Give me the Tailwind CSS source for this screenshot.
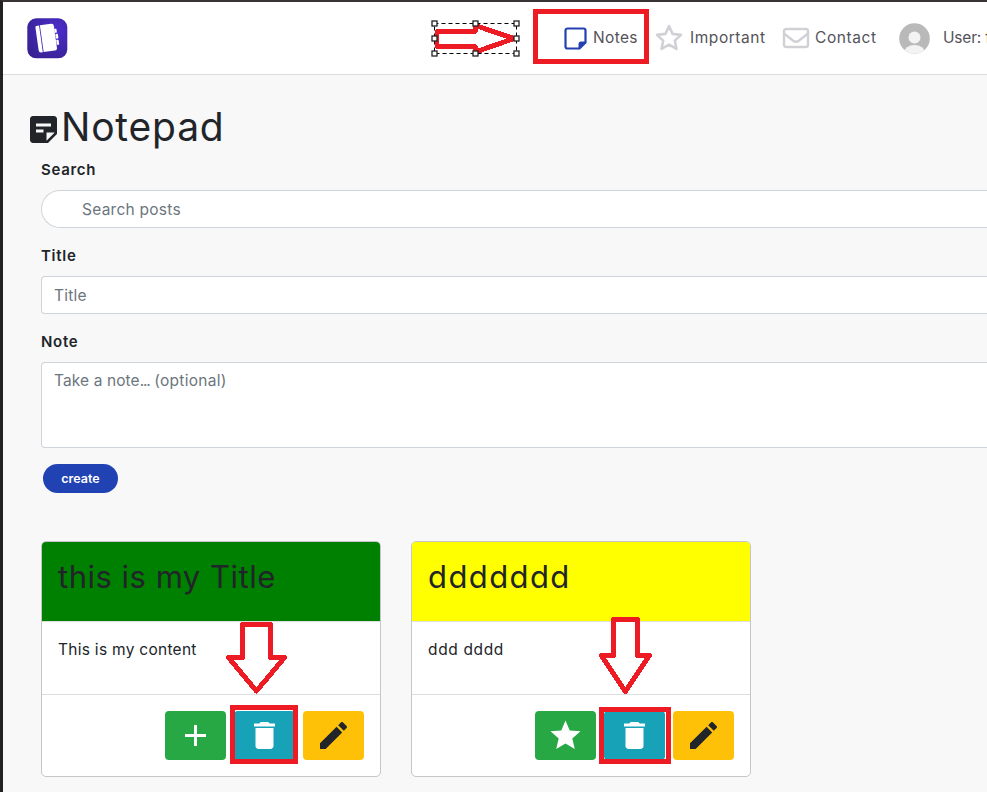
<!DOCTYPE html>
<html lang="en">
<head>
<meta charset="utf-8">
<title>Notepad</title>
<script src="https://cdn.jsdelivr.net/npm/@tailwindcss/browser@4"></script>
</head>
<body class="relative h-[792px] w-[987px] overflow-hidden border-t-2 border-l-3 border-t-[#383436] border-l-[#232122] bg-[#f8f8f8] font-['Inter','Open_Sans',sans-serif] text-base leading-6 text-[#212529]">
<header class="flex h-[73px] items-center overflow-hidden border-b border-[#dcdcde] bg-white pl-6 text-[#545359]">
  <svg class="mt-[1px] size-[41px] shrink-0" viewBox="0 0 41 41">
    <defs><radialGradient id="logo" cx=".7" cy=".3" r=".9"><stop offset="0" stop-color="#4c2dcc"/><stop offset="1" stop-color="#36208e"/></radialGradient></defs>
    <rect x=".3" y=".3" width="40" height="40" rx="9" fill="url(#logo)"/>
    <g fill="#fff" transform="rotate(-8 20 20)"><path d="M11 6.500h2.900v27h-1.400q-2.500 0-2.500-2.500V8.500q0-2 1-2z"/><path d="M14.700 6.500H26q2.500 0 2.500 2.500v22q0 2.500-2.500 2.500H14.700z"/><rect x="28.300" y="12" width="2.300" height="4" rx=".6"/><rect x="28.800" y="17.300" width="2.500" height="4.600" rx=".6"/><rect x="28.800" y="23.200" width="2.400" height="5" rx=".6"/></g>
  </svg>
  <nav class="ml-[495px] flex shrink-0 items-center whitespace-nowrap">
    <a class="flex w-[92px] items-center">
      <svg class="mr-[5px] size-[25px]" viewBox="0 0 25 25"><path d="M4.500 2.500h16a2 2 0 0 1 2 2v12l-6 6h-12a2 2 0 0 1-2-2v-16a2 2 0 0 1 2-2z" fill="none" stroke="#2341b1" stroke-width="2.200"/><path d="M15.500 23.500V18q0-2.500 2.500-2.500h5.500z" fill="#2341b1"/></svg>
      <span class="text-[15.500px] tracking-[.35px]">Notes</span>
    </a>
    <a class="flex w-[127px] items-center">
      <svg class="mr-[7px] size-7" viewBox="0 0 28 28"><path d="m14 2.200 3.600 7.700 8.400 1-6.200 5.700 1.700 8.300-7.500-4.200-7.500 4.200 1.700-8.300L2 10.900l8.400-1z" fill="none" stroke="#d1d0d5" stroke-width="2.600" stroke-linejoin="round"/></svg>
      <span class="text-[15.500px] tracking-[.55px]">Important</span>
    </a>
    <a class="flex w-[117px] items-center">
      <svg class="mr-[5px] h-[22px] w-[28px]" viewBox="0 0 28 22"><rect x="2" y="2" width="24" height="18" rx="2.200" fill="none" stroke="#d1d0d5" stroke-width="2.400"/><path d="M2 6.500l9.200 7.200q2.800 2 5.600 0L26 6.500" fill="none" stroke="#d1d0d5" stroke-width="2.400"/></svg>
      <span class="text-[15.500px] tracking-[.6px]">Contact</span>
    </a>
    <a class="flex items-center">
      <svg class="mr-[13px] size-[31px]" viewBox="0 0 31 31"><clipPath id="avatar"><circle cx="15.500" cy="15.500" r="15.300"/></clipPath><g clip-path="url(#avatar)"><path d="M0 0h31v31H0z" fill="#b9b9b9"/><circle cx="15.500" cy="14.500" r="6" fill="#f3f3f3"/><ellipse cx="15.500" cy="29.500" rx="10.500" ry="7.500" fill="#f3f3f3"/></g></svg>
      <span class="text-[15.500px] tracking-[-.2px]">User: f</span>
    </a>
  </nav>
</header>

<main>
  <h1 class="flex h-[83px] items-end pl-[22px]">
    <svg class="mb-[10px] size-[37px]" viewBox="-.3333 -.3333 24.6667 24.6667" fill="#212529"><path d="M19 3H4.990C3.890 3 3 3.900 3 5l.01 14c0 1.100.89 2 1.990 2h10l6-6V5c0-1.100-.9-2-2-2zM7 8h10v2H7V8zm5 6H7v-2h5v2zm2 5.500V14h5.500L14 19.500z"/></svg>
    <span class="mb-[7px] -ml-px text-[39px] leading-[48px] tracking-[.8px]">Notepad</span>
  </h1>
  <form class="pl-[38px]">
    <label class="block text-[15px] font-semibold tracking-[.7px]">Search</label>
    <div class="mt-2 h-[38px] rounded-l-full border border-r-0 border-[#ced4da] bg-white pt-[7px] pl-10 text-[15.500px] tracking-[.25px] text-[#6c757d]">Search posts</div>
    <label class="mt-4 block text-[15px] font-semibold tracking-[.7px]">Title</label>
    <div class="mt-2 h-[38px] rounded-l border border-r-0 border-[#ced4da] bg-white pt-[7px] pl-3 text-[15.500px] tracking-[.25px] text-[#6c757d]">Title</div>
    <label class="mt-4 block text-[15px] font-semibold tracking-[.7px]">Note</label>
    <div class="mt-2 h-[86px] rounded-l border border-r-0 border-[#ced4da] bg-white pt-[6px] pl-3 text-[15.500px] text-[#6c757d]"><span class="tracking-[.1px]">Take a note</span><span class="tracking-[-1.200px]">...</span><span class="tracking-[.3px]"> (optional)</span></div>
    <button type="button" class="mt-4 ml-[2px] block h-[29px] w-[75px] rounded-full bg-[#2142b3] text-[12.500px] leading-[29px] font-semibold text-white">create</button>
  </form>

  <section class="mt-12 flex gap-[30px] pl-[38px]">
    <article class="flex h-[236px] w-[340px] flex-col overflow-hidden rounded-[5px] border border-[#c5c6c7] bg-white">
      <h2 class="h-[80px] border-b border-[#dfdfdf] bg-[#008000] pt-4 pl-4 text-[31px] leading-[38px] tracking-[.5px]">this is my Title</h2>
      <p class="h-[72px] pt-4 pl-4 text-[15.500px] tracking-[.28px]">This is my content</p>
      <footer class="flex grow items-start justify-end gap-2 border-t border-[#dcdfe2] pt-4 pr-4">
        <button class="flex h-[49px] w-[61px] items-center justify-center rounded bg-[#28a745] text-white"><svg class="size-[37px]" viewBox="-.3333 -.3333 24.6667 24.6667" fill="currentColor"><path d="M19 13h-6v6h-2v-6H5v-2h6V5h2v6h6v2z"/></svg></button>
        <button class="flex h-[49px] w-[61px] items-center justify-center rounded bg-[#17a2b8] text-white"><svg class="size-[37px]" viewBox="-.3333 -.3333 24.6667 24.6667" fill="currentColor"><path d="M6 19c0 1.100.9 2 2 2h8c1.100 0 2-.9 2-2V7H6v12zM19 4h-3.500l-1-1h-5l-1 1H5v2h14V4z"/></svg></button>
        <button class="flex h-[49px] w-[61px] items-center justify-center rounded bg-[#ffc107]"><svg class="size-[37px]" viewBox="-.3333 -.3333 24.6667 24.6667" fill="currentColor"><path d="M3 17.250V21h3.750L17.810 9.940l-3.750-3.750L3 17.250zM20.710 7.040c.39-.39.39-1.020 0-1.410l-2.340-2.340c-.39-.39-1.020-.39-1.410 0l-1.830 1.830 3.750 3.750 1.830-1.830z"/></svg></button>
      </footer>
    </article>
    <article class="flex h-[236px] w-[340px] flex-col overflow-hidden rounded-[5px] border border-[#c5c6c7] bg-white">
      <h2 class="h-[80px] border-b border-[#dfdfdf] bg-[#ffff00] pt-4 pl-4 text-[31px] leading-[38px] tracking-[1.4px]">ddddddd</h2>
      <p class="h-[72px] pt-4 pl-4 text-[15.500px] tracking-[.65px]">ddd dddd</p>
      <footer class="flex grow items-start justify-end gap-2 border-t border-[#dcdfe2] pt-4 pr-4">
        <button class="flex h-[49px] w-[61px] items-center justify-center rounded bg-[#28a745] text-white"><svg class="size-[37px]" viewBox="-.3333 -.3333 24.6667 24.6667" fill="currentColor"><path d="M12 17.270L18.180 21l-1.640-7.030L22 9.240l-7.190-.61L12 2 9.190 8.630 2 9.240l5.460 4.730L5.820 21z"/></svg></button>
        <button class="flex h-[49px] w-[61px] items-center justify-center rounded bg-[#17a2b8] text-white"><svg class="size-[37px]" viewBox="-.3333 -.3333 24.6667 24.6667" fill="currentColor"><path d="M6 19c0 1.100.9 2 2 2h8c1.100 0 2-.9 2-2V7H6v12zM19 4h-3.500l-1-1h-5l-1 1H5v2h14V4z"/></svg></button>
        <button class="flex h-[49px] w-[61px] items-center justify-center rounded bg-[#ffc107]"><svg class="size-[37px]" viewBox="-.3333 -.3333 24.6667 24.6667" fill="currentColor"><path d="M3 17.250V21h3.750L17.810 9.940l-3.750-3.750L3 17.250zM20.710 7.040c.39-.39.39-1.020 0-1.410l-2.340-2.340c-.39-.39-1.020-.39-1.410 0l-1.830 1.830 3.750 3.750 1.830-1.830z"/></svg></button>
      </footer>
    </article>
  </section>
</main>

<!-- Annotation layer: arrows, frames and selection handles -->
<svg class="pointer-events-none absolute -top-[2px] -left-[3px] h-[792px] w-[987px]" viewBox="0 0 987 792" fill="none">
  <g stroke="#ed1c24" stroke-width="5">
    <rect x="535.5" y="11.500" width="111" height="50"/>
    <rect x="232.500" y="707.500" width="63" height="54"/>
    <rect x="601.500" y="709.500" width="67" height="52"/>
    <g stroke-linejoin="round" shape-rendering="crispEdges">
      <path d="M242.500 657.500V624.500H270.500V657.500H284.500L256.500 691 228.500 657.500z"/>
      <path d="M613.500 655.500V619.500H637.500V655.500H649.500L625.500 691.500 601.500 655.500z"/>
    </g>
    <path stroke-linejoin="bevel" shape-rendering="crispEdges" d="M436 31.500H475.500V25.500L514 38.500 475.500 52V46.500H436z" />
  </g>
  <rect x="434.500" y="23.500" width="82" height="30" stroke="#fff"/>
  <rect x="434.500" y="23.500" width="82" height="30" stroke="#000" stroke-dasharray="4 3"/>
  <g fill="#fff" stroke="#222" stroke-width="1.300">
    <rect x="432" y="21" width="5" height="5"/><rect x="473" y="21" width="5" height="5"/><rect x="514" y="21" width="5" height="5"/>
    <rect x="432" y="36" width="5" height="5"/><rect x="514" y="36" width="5" height="5"/>
    <rect x="432" y="51" width="5" height="5"/><rect x="473" y="51" width="5" height="5"/><rect x="514" y="51" width="5" height="5"/>
  </g>
</svg>
<!-- Resize handle on the left frame edge -->
<div class="absolute top-[404px] -left-[3px] h-[6px] w-[3px] border-y border-r border-black bg-white"></div>
</body>
</html>
